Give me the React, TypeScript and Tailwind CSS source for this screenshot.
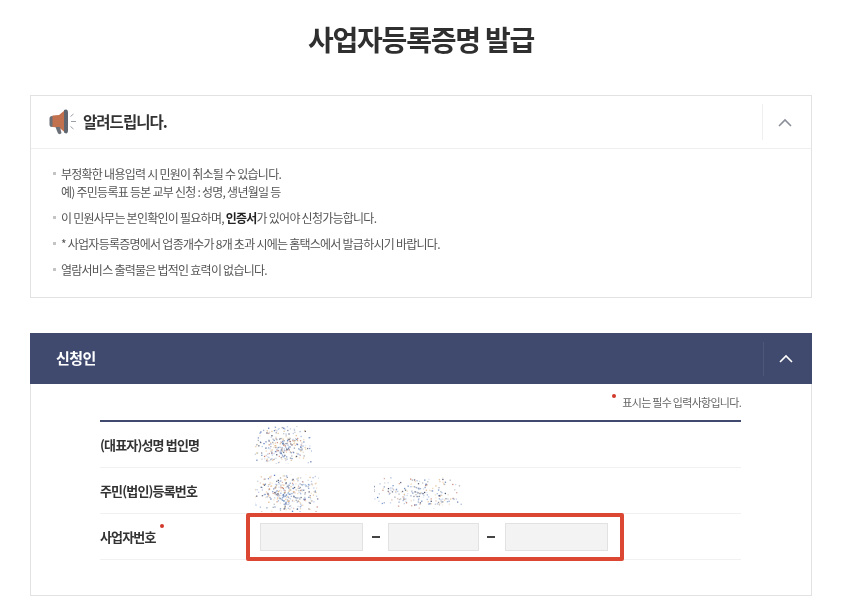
import React from "react";

function noise(seed: number, w: number, h: number, n: number) {
  const colors = ["#2f5aa8", "#d9a566", "#6f8cc4", "#b5654f", "#1c2440", "#9db4dc", "#e6c08f", "#4a6aa5", "#8a8f99"];
  let s = seed;
  const r = () => {
    s = (s * 16807) % 2147483647;
    return s / 2147483647;
  };
  const out: { x: number; y: number; c: string; o: number }[] = [];
  for (let i = 0; i < n; i++) {
    const x = w / 2 + ((r() + r()) / 2 - 0.5) * w * 1.25;
    const y = h / 2 + ((r() + r()) / 2 - 0.5) * h * 1.25;
    out.push({ x, y, c: colors[Math.floor(r() * colors.length)], o: 0.3 + r() * 0.5 });
  }
  return out;
}

function Mosaic({ seed, w, h, n, className }: { seed: number; w: number; h: number; n: number; className?: string }) {
  return (
    <svg width={w} height={h} viewBox={`0 0 ${w} ${h}`} className={className}>
      {noise(seed, w, h, n).map((p, i) => (
        <rect key={i} x={p.x} y={p.y} width={1.3} height={1.3} fill={p.c} opacity={p.o} />
      ))}
    </svg>
  );
}

function Chevron({ color }: { color: string }) {
  return (
    <svg width="14" height="9" viewBox="0 0 14 9" fill="none">
      <path d="M1 8 L7 2 L13 8" stroke={color} strokeWidth="1.6" />
    </svg>
  );
}

function Megaphone() {
  return (
    <svg width="28" height="26" viewBox="0 0 28 26" fill="none">
      <rect x="0.5" y="7" width="5" height="11" rx="2.5" fill="#6b6f78" />
      <path d="M3.5 6.5 L10 6 L15.5 1.5 L15.5 23 L10 18.5 L3.5 18 Z" fill="#c2714f" />
      <path d="M15 1 L17 0.5 C18.5 0.5 19 2 19 4 L19 21 C19 23 18.5 24.5 17 24.5 L15 23.5 Z" fill="#5f6670" />
      <path d="M6.5 18 L11 18 L12.5 24 C11.5 25.5 9.5 25.5 8.8 24 Z" fill="#6b6f78" />
      <path d="M21.5 7.5 L24.5 5 M22 12.5 L27 12.5 M21.5 17.5 L24.5 20" stroke="#9aa0a8" strokeWidth="1" />
    </svg>
  );
}

function Notice({ children }: { children: React.ReactNode }) {
  return (
    <li className="flex text-[12px] leading-[18px] tracking-[-0.75px] text-[#555]">
      <span className="mr-[5px] mt-[7px] h-[3px] w-[3px] shrink-0 bg-[#c4c4c4]" />
      <div>{children}</div>
    </li>
  );
}

function Dot() {
  return <span className="block h-[4px] w-[4px] rounded-full bg-[#d0392b]" />;
}

function Field({ w }: { w: string }) {
  return <div className={`h-[28px] border border-[#e2e2e2] bg-[#f3f3f3] ${w}`} />;
}

const label = "text-[13px] font-bold tracking-[-0.85px] text-[#333]";

export default function App() {
  return (
    <div className="h-[613px] w-[854px] overflow-hidden bg-white font-['Noto_Sans_CJK_KR','Noto_Sans',sans-serif] blur-[0.5px]">
      <h1 className="pr-[12px] pt-[20px] text-center text-[28px] font-bold leading-[38px] tracking-[-1.2px] text-[#2f2f2f]">
        사업자등록증명 발급
      </h1>

      <section className="ml-[30px] mt-[37px] h-[203px] w-[782px] border border-[#e2e2e2]">
        <div className="flex h-[53px] items-center justify-between border-b border-[#efefef]">
          <div className="flex items-center pl-[18px]">
            <Megaphone />
            <span className="ml-[6px] text-[15.5px] font-bold tracking-[-0.95px] text-[#333]">알려드립니다.</span>
          </div>
          <div className="flex h-[36px] w-[49px] items-center justify-center border-l border-[#efefef] pr-[4px]">
            <Chevron color="#8a8f99" />
          </div>
        </div>
        <ul className="flex flex-col gap-[8px] pl-[22px] pt-[16px]">
          <Notice>
            부정확한 내용입력 시 민원이 취소될 수 있습니다.
            <br />
            예) 주민등록표 등본 교부 신청 : 성명, 생년월일 등
          </Notice>
          <Notice>
            이 민원사무는 본인확인이 필요하며, <b className="font-bold text-[#222]">인증서</b>가 있어야 신청가능합니다.
          </Notice>
          <Notice>* 사업자등록증명에서 업종개수가 8개 초과 시에는 홈택스에서 발급하시기 바랍니다.</Notice>
          <Notice>열람서비스 출력물은 법적인 효력이 없습니다.</Notice>
        </ul>
      </section>

      <section className="ml-[30px] mt-[35px] h-[263px] w-[782px] border border-t-0 border-[#e2e2e2]">
        <div className="-mx-px flex h-[51px] items-center justify-between bg-[#3f4a6e]">
          <span className="pl-[26px] text-[15px] font-bold tracking-[-0.6px] text-white">신청인</span>
          <div className="flex h-[34px] w-[49px] items-center justify-center border-l border-[#4d5879] pr-[5px]">
            <Chevron color="#ffffff" />
          </div>
        </div>

        <div className="ml-[69px] w-[641px]">
          <div className="flex h-[36px] items-center justify-end">
            <span className="mb-[12px] mr-[6px]">
              <Dot />
            </span>
            <span className="text-[11px] tracking-[-0.72px] text-[#666]">표시는 필수 입력사항입니다.</span>
          </div>
          <div className="border-t-2 border-[#3f4a6e]">
            <div className="flex h-[46px] items-center border-b border-[#f1f1f1]">
              <span className={`w-[146px] ${label}`}>(대표자)성명 법인명</span>
              <Mosaic seed={11} w={58} h={38} n={300} className="ml-[8px]" />
            </div>
            <div className="flex h-[46px] items-center border-b border-[#f1f1f1]">
              <span className={`w-[146px] ${label}`}>주민(법인)등록번호</span>
              <Mosaic seed={29} w={64} h={38} n={360} className="ml-[9px] mt-[4px]" />
              <Mosaic seed={53} w={88} h={32} n={210} className="ml-[55px] mt-[4px]" />
            </div>
            <div className="flex h-[46px] items-center border-b border-[#f1f1f1]">
              <div className={`flex w-[146px] items-center ${label}`}>
                사업자번호
                <span className="mb-[22px] ml-[4px]">
                  <Dot />
                </span>
              </div>
              <div className="flex h-[48px] w-[378px] shrink-0 items-center rounded-[2px] border-[4px] border-[#dc4733] pl-[10px]">
                <Field w="w-[103px]" />
                <span className="ml-[9px] mr-[8px] h-[2px] w-[8px] bg-[#444]" />
                <Field w="w-[91px]" />
                <span className="ml-[8px] mr-[10px] h-[2px] w-[8px] bg-[#444]" />
                <Field w="w-[103px]" />
              </div>
            </div>
          </div>
        </div>
      </section>
    </div>
  );
}
